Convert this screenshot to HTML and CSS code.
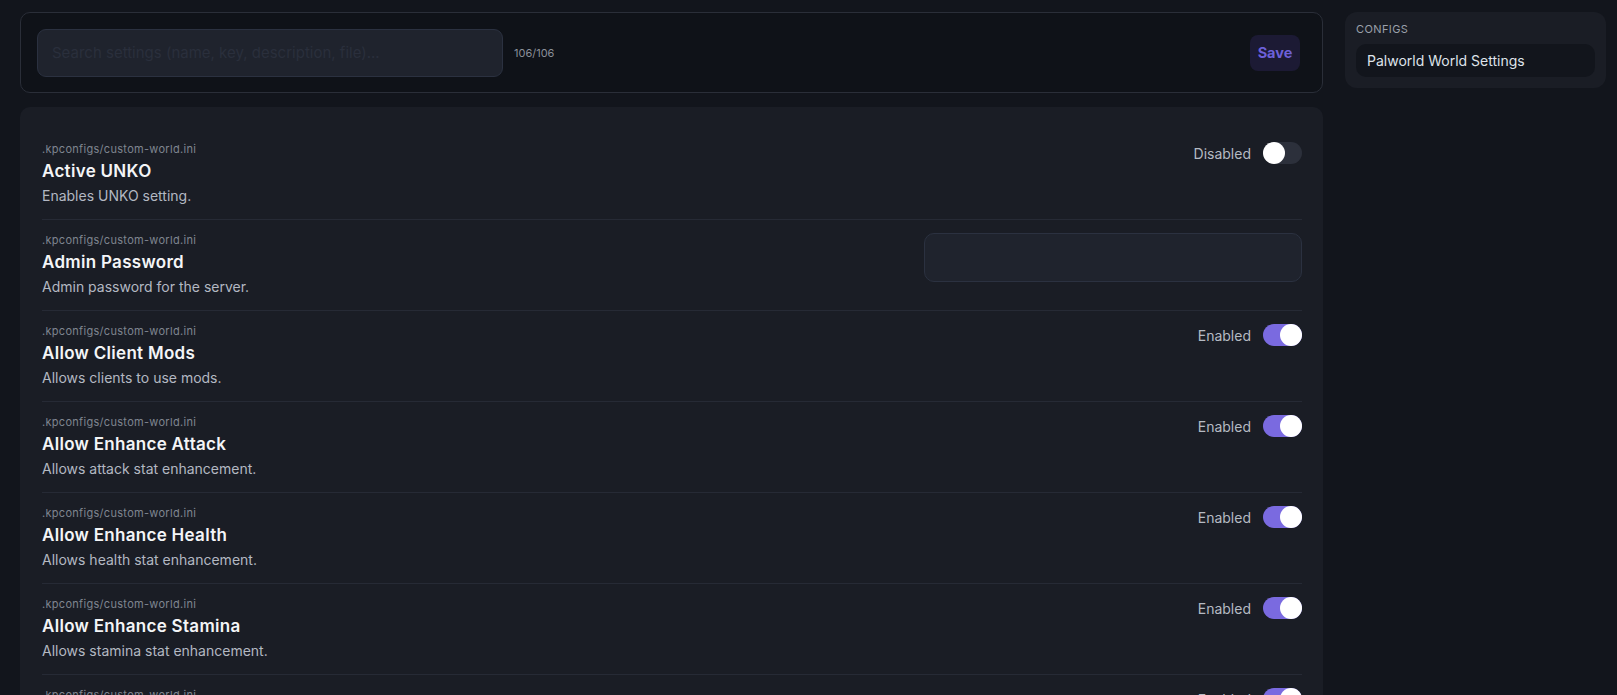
FILE: index.html
```html
<!DOCTYPE html>
<html lang="en">
<head>
<meta charset="utf-8">
<title>Configs</title>
<link rel="stylesheet" href="styles.css">
</head>
<body>
<div class="layout">
  <main class="main">
    <div class="toolbar">
      <input class="search" type="text" placeholder="Search settings (name, key, description, file)...">
      <span class="count">106/106</span>
      <button class="save">Save</button>
    </div>
    <section class="list">
      <div class="row">
        <div class="info">
          <div class="file">.kpconfigs/custom-world.ini</div>
          <div class="title">Active UNKO</div>
          <div class="desc">Enables UNKO setting.</div>
        </div>
        <div class="control"><span class="state">Disabled</span><span class="toggle"><span class="knob"></span></span></div>
      </div>
      <div class="row">
        <div class="info">
          <div class="file">.kpconfigs/custom-world.ini</div>
          <div class="title">Admin Password</div>
          <div class="desc">Admin password for the server.</div>
        </div>
        <div class="control"><input class="field" type="text"></div>
      </div>
      <div class="row">
        <div class="info">
          <div class="file">.kpconfigs/custom-world.ini</div>
          <div class="title">Allow Client Mods</div>
          <div class="desc">Allows clients to use mods.</div>
        </div>
        <div class="control"><span class="state">Enabled</span><span class="toggle on"><span class="knob"></span></span></div>
      </div>
      <div class="row">
        <div class="info">
          <div class="file">.kpconfigs/custom-world.ini</div>
          <div class="title">Allow Enhance Attack</div>
          <div class="desc">Allows attack stat enhancement.</div>
        </div>
        <div class="control"><span class="state">Enabled</span><span class="toggle on"><span class="knob"></span></span></div>
      </div>
      <div class="row">
        <div class="info">
          <div class="file">.kpconfigs/custom-world.ini</div>
          <div class="title">Allow Enhance Health</div>
          <div class="desc">Allows health stat enhancement.</div>
        </div>
        <div class="control"><span class="state">Enabled</span><span class="toggle on"><span class="knob"></span></span></div>
      </div>
      <div class="row">
        <div class="info">
          <div class="file">.kpconfigs/custom-world.ini</div>
          <div class="title">Allow Enhance Stamina</div>
          <div class="desc">Allows stamina stat enhancement.</div>
        </div>
        <div class="control"><span class="state">Enabled</span><span class="toggle on"><span class="knob"></span></span></div>
      </div>
      <div class="row">
        <div class="info">
          <div class="file">.kpconfigs/custom-world.ini</div>
          <div class="title">Allow Enhance Weight</div>
          <div class="desc">Allows weight stat enhancement.</div>
        </div>
        <div class="control"><span class="state">Enabled</span><span class="toggle on"><span class="knob"></span></span></div>
      </div>
    </section>
  </main>
  <aside class="side">
    <div class="side-label">CONFIGS</div>
    <div class="side-item">Palworld World Settings</div>
  </aside>
</div>
</body>
</html>
```
FILE: styles.css
```css
* { box-sizing: border-box; }
html, body { margin: 0; height: 100%; overflow: hidden; }
body {
  background: #12151c;
  font-family: Inter, "Liberation Sans", sans-serif;
  color: #e6e8ec;
}
.layout {
  display: grid;
  grid-template-columns: 1303px 261px;
  column-gap: 22px;
  padding: 12px 0 0 20px;
  align-items: start;
}
.main { display: flex; flex-direction: column; gap: 14px; }
.toolbar {
  height: 81px;
  display: flex;
  align-items: center;
  padding: 0 22px 0 16px;
  border: 1px solid #2a2e38;
  border-radius: 10px;
  background: #0f1218;
}
.search {
  width: 466px;
  height: 48px;
  background: #1f232d;
  border: 1px solid #2b3140;
  border-radius: 9px;
  padding: 0 14px;
  font: 15px Inter, "Liberation Sans", sans-serif;
  color: #e6e8ec;
  outline: none;
}
.search::placeholder { color: #2a2f3c; }
.count {
  margin-left: 11px;
  font-size: 11px;
  color: #8a8f99;
}
.save {
  margin-left: auto;
  width: 50px;
  height: 36px;
  border: 0;
  border-radius: 8px;
  background: #1c1a34;
  color: #6d60d8;
  font: 700 14.5px Inter, "Liberation Sans", sans-serif;
  padding: 0;
}
.list {
  background: #1a1d25;
  border-radius: 10px;
  padding: 21px 21px 0 22px;
}
.row {
  display: flex;
  justify-content: space-between;
  align-items: flex-start;
  padding: 13px 0 14px;
  border-top: 1px solid #262a35;
}
.row:first-child { border-top: 1px solid transparent; }
.info { display: flex; flex-direction: column; }
.file { font-size: 11px; letter-spacing: 0.3px; line-height: 14px; color: #7f8590; }
.title { font-size: 17px; font-weight: 600; letter-spacing: 0.3px; line-height: 22px; margin-top: 4px; color: #f4f5f7; }
.desc { font-size: 14px; line-height: 18px; margin-top: 5px; color: #b3b8c2; }
.control { display: flex; align-items: center; gap: 12px; padding-top: 0; }
.state { font-size: 14px; color: #b5bac3; }
.toggle {
  width: 39px;
  height: 22px;
  border-radius: 11px;
  background: #2c303b;
  display: flex;
  align-items: center;
  justify-content: flex-start;
}
.toggle.on { background: #7a6ae0; justify-content: flex-end; }
.knob { width: 22px; height: 22px; border-radius: 50%; background: #ffffff; }
.field {
  width: 378px;
  height: 49px;
  background: #1f232d;
  border: 1px solid #2b3140;
  border-radius: 10px;
  outline: none;
}
.side {
  background: #1a1d25;
  border-radius: 12px;
  padding: 10px 11px 11px 11px;
}
.side-label {
  font-size: 11px;
  letter-spacing: 0.4px;
  line-height: 14px;
  color: #9aa0aa;
  margin-bottom: 8px;
}
.side-item {
  height: 33px;
  display: flex;
  align-items: center;
  padding: 0 11px;
  border-radius: 10px;
  background: #12151c;
  font-size: 14px;
  color: #dfe3ea;
}
```
